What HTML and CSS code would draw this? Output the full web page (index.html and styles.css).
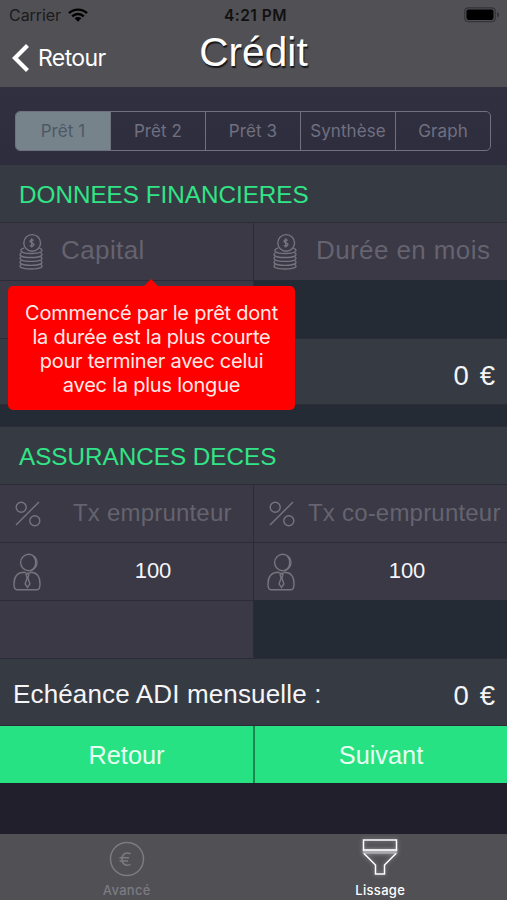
FILE: index.html
```html
<!DOCTYPE html>
<html lang="fr">
<head>
<meta charset="utf-8">
<title>Crédit</title>
<link rel="stylesheet" href="styles.css">
</head>
<body>
<svg class="defs" width="0" height="0">
  <symbol id="coins" viewBox="0 0 26 38">
    <circle cx="14.2" cy="10.2" r="8.6"/>
    <path d="M15.8 7.7c-.6-.9-3.8-1.2-3.8.7 0 2 4 1.3 4 3.5 0 2-3.400 1.900-4.200.8M13.800 5.500v9.500"/>
    <path d="M6.200 15.300c-7 2.200-3.600 5.800 6.800 5.800s14.500-3 8.600-5.500"/>
    <path d="M3.400 20c-4.600 3 .6 5.200 9.600 5.200s14.200-2.200 9.600-5.200"/>
    <path d="M3.400 24c-4.600 3 .6 5.200 9.600 5.200s14.200-2.200 9.600-5.200"/>
    <path d="M3.400 28c-4.600 3 .6 5.200 9.600 5.200s14.200-2.200 9.600-5.200"/>
    <path d="M3.400 32c-4.600 3 .6 5 9.600 5s14.200-2 9.600-5"/>
  </symbol>
  <symbol id="percent" viewBox="0 0 26 26">
    <circle cx="6.200" cy="6.200" r="5"/>
    <circle cx="19.800" cy="19.800" r="5"/>
    <path d="M1 24 24 1"/>
  </symbol>
  <symbol id="person" viewBox="0 0 28 38">
    <circle cx="15.800" cy="9.500" r="8.200"/>
    <path d="M20 3.200c4.200 3.200 3.500 12-2.200 14.400"/>
    <path d="M11.500 19.200C4 19.200 1 24 1 31c0 4 .5 5.800 3 5.800h20c2.500 0 3-1.800 3-5.800 0-7-3-11.800-9.500-11.800-1.300 1.500-4.500 1.500-6 0Z"/>
    <path d="M14.500 20.500l-1.400 1.300 1 3.200-2 6 2.400 3.500 2.400-3.500-2-6 1-3.200Z"/>
  </symbol>
</svg>
<div class="app">
  <header class="header">
    <div class="status">
      <div class="carrier">Carrier
        <svg class="wifi" viewBox="0 0 20 14"><path d="M1 5.200a13 13 0 0 1 18 0M4.200 8.300a8.300 8.300 0 0 1 11.600 0"/><path class="dot" d="M6.600 10.300a4.900 4.900 0 0 1 6.800 0L10 13.700Z"/></svg>
      </div>
      <div class="time">4:21 PM</div>
      <svg class="battery" viewBox="0 0 36 16"><rect class="case" x=".8" y=".8" width="30.400" height="13.800" rx="3.500"/><rect x="2.500" y="2.500" width="27" height="10.400" rx="1.800"/><path class="tip" d="M33 5v5.500q2.300-1 2.300-2.750T33 5Z"/></svg>
    </div>
    <div class="nav">
      <div class="back">
        <svg viewBox="0 0 18 30"><path d="M15.500 2.500 3 15l12.500 12.500"/></svg>
        <span>Retour</span>
      </div>
      <h1>Crédit</h1>
    </div>
  </header>
  <main>
    <div class="segments">
      <div class="seg active">Prêt 1</div><div class="seg">Prêt 2</div><div class="seg">Prêt 3</div><div class="seg">Synthèse</div><div class="seg">Graph</div>
    </div>
    <section class="block first">
      <h2>DONNEES FINANCIERES</h2>
      <div class="grid">
        <div class="cell"><svg class="coins"><use href="#coins"/></svg><span class="hint large">Capital</span></div>
        <div class="cell"><svg class="coins"><use href="#coins"/></svg><span class="hint large right">Durée en mois</span></div>
        <div class="cell"></div>
        <div class="cell empty"></div>
      </div>
      <div class="total"><span></span><span class="amount">0 €</span></div>
      <div class="tooltip">Commencé par le prêt dont<br>la durée est la plus courte<br>pour terminer avec celui<br>avec la plus longue</div>
    </section>
    <section class="block second">
      <h2 class="insurance">ASSURANCES DECES</h2>
      <div class="grid">
        <div class="cell"><svg class="percent"><use href="#percent"/></svg><span class="hint rate">Tx emprunteur</span></div>
        <div class="cell"><svg class="percent"><use href="#percent"/></svg><span class="hint rate co">Tx co-emprunteur</span></div>
        <div class="cell"><svg class="person"><use href="#person"/></svg><span class="value">100</span></div>
        <div class="cell"><svg class="person"><use href="#person"/></svg><span class="value">100</span></div>
        <div class="cell"></div>
        <div class="cell empty"></div>
      </div>
      <div class="total"><span class="label">Echéance ADI mensuelle :</span><span class="amount">0 €</span></div>
      <div class="actions"><div class="button">Retour</div><div class="button">Suivant</div></div>
    </section>
  </main>
  <nav class="tabs">
    <div class="tab">
      <svg viewBox="0 0 36 36"><circle cx="18" cy="18" r="16.500"/><path d="M21.500 12.800c-5.500-2.400-8.500 1-8.500 5.500s3.500 7.500 8.500 5M10.500 16.800h9.500M10.500 20h8.500"/></svg>
      <span>Avancé</span>
    </div>
    <div class="tab selected">
      <svg viewBox="0 0 36 36"><path class="band" d="M1.500 11h33v3h-33Z"/><path d="M1.500 1h33v10h-33ZM2 14.500 13.500 26v9h9v-9L34 14.500"/></svg>
      <span>Lissage</span>
    </div>
  </nav>
</div>
</body>
</html>
```

FILE: styles.css
```css
* { box-sizing: border-box; }
body { margin: 0; background: #211f2b; font-family: "Liberation Sans", Arial, sans-serif; }
.defs { position: absolute; }
.app { width: 507px; height: 900px; display: flex; flex-direction: column; overflow: hidden; white-space: nowrap; background: linear-gradient(#313041 87px, #2e2d3d 165px, #211f2b 790px); }
svg { fill: none; stroke: currentColor; flex: none; }

.header { height: 87px; background: #515055; }
.status { height: 29px; display: grid; grid-template-columns: 1fr auto 1fr; align-items: center; padding: 1px 7px 0 9px; font: 500 15.5px Inter, sans-serif; color: #111; }
.carrier { display: flex; align-items: center; gap: 7px; font-weight: 400; font-size: 16px; letter-spacing: -.05px; color: #1b1b1d; }
.wifi { width: 20px; height: 14px; color: #000; stroke-width: 2.400; }
.wifi .dot { fill: #000; stroke: none; }
.time { font-weight: 600; letter-spacing: .5px; margin-left: 2px; }
.battery { width: 36px; height: 16px; justify-self: end; color: #000; fill: #000; stroke: none; }
.battery .case { fill: none; stroke: #343438; stroke-width: 1.200; }
.battery .tip { fill: #343438; }
.nav { height: 58px; display: grid; grid-template-columns: 1fr auto 1fr; color: #fff; }
.back { display: flex; align-items: center; height: 58px; padding: 0 0 1px 12px; gap: 8px; font: 400 23px Inter, sans-serif; letter-spacing: -.6px; }
.back svg { width: 18px; height: 30px; stroke-width: 4.200; }
.back span { padding-top: 1px; }
h1 { margin: 0; font: 400 40.5px/46px "Liberation Sans", Arial, sans-serif; letter-spacing: .1px; text-shadow: 1px 1.500px 1px #17171a; }

.segments { height: 40px; margin: 24px 16px 13px 15px; display: grid; grid-template-columns: 94px repeat(4, 1fr); border: 1px solid #6f7080; border-radius: 5px; overflow: hidden; }
.seg { display: flex; align-items: center; justify-content: center; font: 400 17px Inter, sans-serif; letter-spacing: .1px; color: #707080; border-left: 1px solid #6f7080; }
.seg.active { background: #77838b; color: #4d5865; border-left: 0; }

.block { position: relative; background: #2b2c38; padding-top: 1px; }
.first { z-index: 1; }
.second { border-top: 21px solid #252b34; }
h2 { margin: 0; height: 57px; padding: 3px 0 0 19px; display: flex; align-items: center; background: #363b43; color: #31e486; font-size: 24.250px; font-weight: 400; }
h2.insurance { padding-top: 2px; }
.grid { display: grid; grid-template-columns: 253px 253px; grid-auto-rows: 57px; gap: 1px; padding: 1px 0; }
.cell { display: flex; align-items: center; background: #3a3945; color: #77747f; }
.cell.empty { background: #252b34; margin-top: -1px; }
.coins { width: 26px; height: 37px; margin: -1px 0 0 18px; stroke-width: 1.400; }
.percent { width: 26px; height: 26px; margin: 0 0 0 15px; stroke-width: 1.400; }
.person { width: 28px; height: 38px; margin: 0 0 0 13px; stroke-width: 1.400; }
.hint { color: #65636f; }
.large { font-size: 26px; letter-spacing: .4px; margin: -2px 0 0 17px; }
.rate { font-size: 24px; letter-spacing: .2px; margin: -1px 0 0 32px; }
.right { margin-left: 18px; }
.co { margin-left: 13px; }
.value { flex: 1; text-align: center; margin: -2px -12px 0 0; font-size: 22px; color: #f7f5fa; }
.total { height: 66px; display: flex; justify-content: space-between; align-items: center; padding: 6px 12px 0 13px; background: #363b43; border-bottom: 1px solid #2b2c38; color: #f5f5f7; font-size: 26px; }
.second .total { height: 67px; padding-top: 5px; }
.label { letter-spacing: .15px; }
.amount { font-size: 27.500px; letter-spacing: 1.600px; margin-right: -1.600px; padding-top: 2px; }
.tooltip { position: absolute; left: 8px; top: 122px; width: 287px; height: 124px; padding-top: 15px; border-radius: 5px; background: #f00; color: #ffe9e6; text-align: center; font: 400 20px/24px Inter, sans-serif; letter-spacing: -.23px; }
.tooltip::before { content: ""; position: absolute; left: 136px; top: -7px; border: 7px solid transparent; border-top: 0; border-bottom-color: #f00; }
.actions { display: grid; grid-template-columns: 253px 252px; gap: 2px; height: 57px; background: #19864f; }
.button { display: flex; align-items: center; justify-content: center; padding-top: 2px; background: #27e282; color: #e6fff0; font-size: 25.300px; }

.tabs { height: 66px; margin-top: auto; display: grid; grid-template-columns: 1fr 1fr; background: #515055; }
.tab { display: flex; flex-direction: column; align-items: center; padding-top: 7px; color: #7c7b81; font: 500 13px/16px Inter, sans-serif; letter-spacing: .3px; }
.tab svg { width: 36px; height: 36px; margin-bottom: 5px; stroke-width: 1.500; }
.tab.selected { padding-top: 5px; color: #fff; }
.tab.selected svg { margin-bottom: 7px; stroke-width: 1.500; filter: drop-shadow(0 0 2px #99989e); }
.tab .band { fill: #aaa9b0; stroke: #aaa9b0; }
```
